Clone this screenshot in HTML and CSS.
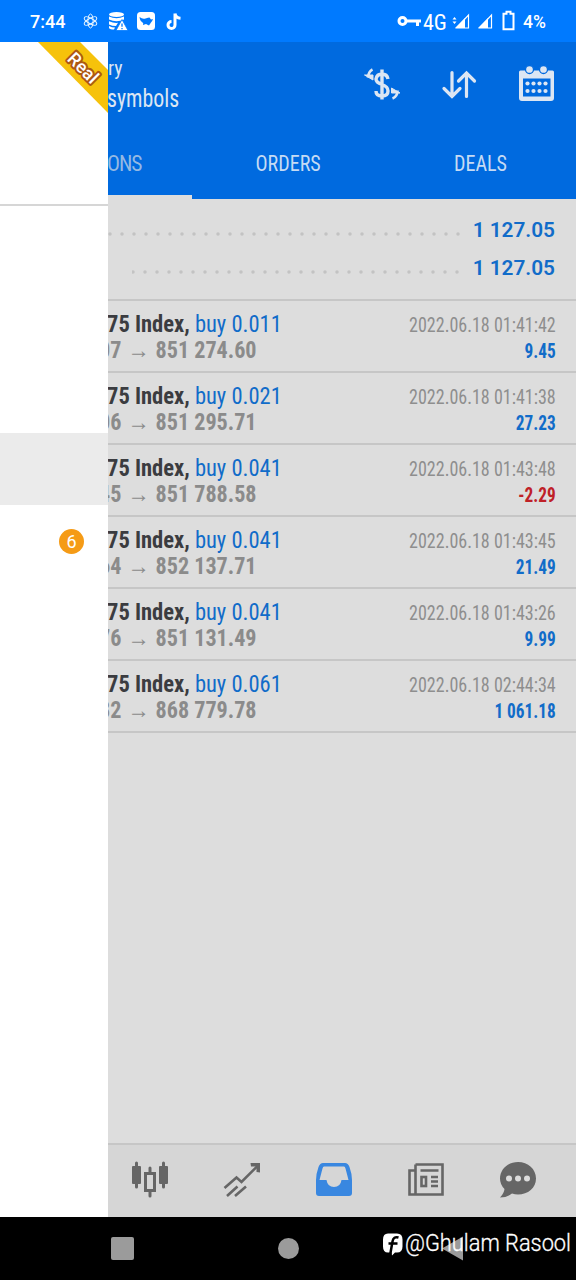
FILE: index.html
```html
<!DOCTYPE html>
<html lang="en">
<head>
<meta charset="utf-8">
<title>History</title>
<link rel="stylesheet" href="styles.css">
</head>
<body>
<div class="phone">
  <header class="status">
    <span class="clock">7:44</span>
    <svg class="s-left" width="102" height="22" viewBox="82 10 102 22">
      <g fill="none" stroke="#e6f4ff" stroke-width="1"><ellipse cx="90.500" cy="21" rx="2.600" ry="7"/><ellipse cx="90.500" cy="21" rx="2.600" ry="7" transform="rotate(60 90.500 21)"/><ellipse cx="90.500" cy="21" rx="2.600" ry="7" transform="rotate(120 90.500 21)"/></g>
      <g fill="#fff"><ellipse cx="116.500" cy="14.500" rx="7.500" ry="2.500"/><path d="M109 16.500q7.500 3.500 15 0v3q-7.500 3.500-15 0zM109 21.300q5 2 9 1.500l-2 3.200q-4 0-7-1.500zM109 26q3 1.500 6 1.500l-1 2q-4 0-5-1.500z"/><path d="M122 19.500l6 11h-12z" stroke="#007aff" stroke-width=".8"/></g><path d="M122 23.500v3.200M122 28v1.200" stroke="#007aff" stroke-width="1.300"/>
      <rect x="137" y="12" width="18" height="18" rx="3.500" fill="#fff"/><path d="M139.500 17q3 2.500 6 1.500t4-1l1.500 2 2-.5q-1 3-2 3.500l-2 3-3-1.500-3 1q1-2-1-3t-2.500-5z" fill="#007aff"/>
      <path d="M175 13.500v11.500a3.500 3.500 0 1 1-3.500-3.500M175 13.500q.7 4.500 5.500 4.800" fill="none" stroke="#fff" stroke-width="3"/>
    </svg>
    <svg class="s-key" width="25" height="14" viewBox="0 0 25 14"><circle cx="5.500" cy="7" r="3.500" fill="none" stroke="#fff" stroke-width="3"/><path d="M9 7h15M20.500 7v5" stroke="#fff" stroke-width="3"/></svg>
    <span class="net">4G</span>
    <svg class="s-sig" width="64" height="22" viewBox="450 10 64 22"><path d="M451.500 19.500l2-2.500 2 2.500zM451.500 21.500l2 2.500 2-2.500z" fill="#fff"/><path d="M467.500 15v13h-12zM490.500 15v13h-12z" fill="none" stroke="#fff" stroke-width="1.200"/><path d="M464 18v10h-10zM487 18v10h-10z" fill="#fff"/><path d="M502.500 13.700h3v-2h4v2h3v15.600h-10z" fill="none" stroke="#fff" stroke-width="2"/></svg>
    <span class="pct">4%</span>
  </header>
  <div class="body">
    <aside class="drawer">
      <div class="account">
        <svg width="108" height="74" viewBox="0 42 108 74"><path d="M38 42h42l28 28v43z" fill="#f6c20b"/><text class="ribbon" x="83" y="74" transform="rotate(45 83 68)" text-anchor="middle">Real</text></svg>
      </div>
      <div class="item gap"></div>
      <div class="item selected"></div>
      <div class="item mail"><span class="badge">6</span></div>
    </aside>
    <main class="content">
      <div class="appbar">
        <div class="titles"><div class="t1">ry</div><div class="t2">symbols</div></div>
        <div class="actions">
          <svg width="38" height="38" viewBox="363 65 38 38" fill="none" stroke="#dce6f3"><path d="M388 79q-1-5-6-5t-6 5q0 3.500 6 5.500t6 6.500q0 5-6 5t-6-5M382 69.500v30" stroke-width="3.400"/><path d="M372.500 69.500q-4 2-4.500 8M392.500 98.500q5-2 5-8" stroke-width="2.600"/><path d="M364.500 75l8.500 5v-5zM400 93l-8.500-5v5z" fill="#dce6f3" stroke-width="1"/></svg>
          <svg width="38" height="38" viewBox="440.500 65 38 38" fill="none" stroke="#dce6f3" stroke-width="3.200" stroke-linecap="round"><path d="M452.500 72.500v23M444.500 88.500l8 8 8-8M467 96.500V74M459 81l8-8 8 8"/></svg>
          <svg width="38" height="38" viewBox="517 65 38 38"><path d="M519 72q0-1.500 1.500-1.500h32q1.500 0 1.500 1.500v26q0 3-3 3h-29q-3 0-3-3zM523 78.500v18h27.500v-18z" fill="#dce6f3" fill-rule="evenodd"/><g fill="#dce6f3" stroke="#006adf" stroke-width="1.300"><circle cx="529.500" cy="69.500" r="4"/><circle cx="543.500" cy="69.500" r="4"/></g><g fill="#dce6f3"><circle cx="527.500" cy="83.500" r="2.100"/><circle cx="533.500" cy="83.500" r="2.100"/><circle cx="539.500" cy="83.500" r="2.100"/><circle cx="545.500" cy="83.500" r="2.100"/><circle cx="527.500" cy="91" r="2.100"/><circle cx="533.500" cy="91" r="2.100"/><circle cx="539.500" cy="91" r="2.100"/><circle cx="545.500" cy="91" r="2.100"/></g></svg>
        </div>
      </div>
      <nav class="tabs"><div class="tab active">ONS</div><div class="tab"><span>ORDERS</span></div><div class="tab"><span>DEALS</span></div></nav>
      <section class="summary">
        <div class="sum"><svg width="354" height="4"><path d="M2 2h352" class="dots"/></svg><b>1 127.05</b></div>
        <div class="sum"><svg width="330" height="4"><path d="M1 2h328" class="dots"/></svg><b>1 127.05</b></div>
      </section>
      <section class="deals">
        <div class="row"><div class="l"><div class="sym"><b>75 Index,</b> buy 0.011</div><div class="price">07 <i>→</i> 851 274.60</div></div><div class="r"><div class="date">2022.06.18 01:41:42</div><div class="profit">9.45</div></div></div>
        <div class="row"><div class="l"><div class="sym"><b>75 Index,</b> buy 0.021</div><div class="price">06 <i>→</i> 851 295.71</div></div><div class="r"><div class="date">2022.06.18 01:41:38</div><div class="profit">27.23</div></div></div>
        <div class="row"><div class="l"><div class="sym"><b>75 Index,</b> buy 0.041</div><div class="price">45 <i>→</i> 851 788.58</div></div><div class="r"><div class="date">2022.06.18 01:43:48</div><div class="profit loss">-2.29</div></div></div>
        <div class="row"><div class="l"><div class="sym"><b>75 Index,</b> buy 0.041</div><div class="price">64 <i>→</i> 852 137.71</div></div><div class="r"><div class="date">2022.06.18 01:43:45</div><div class="profit">21.49</div></div></div>
        <div class="row"><div class="l"><div class="sym"><b>75 Index,</b> buy 0.041</div><div class="price">76 <i>→</i> 851 131.49</div></div><div class="r"><div class="date">2022.06.18 01:43:26</div><div class="profit">9.99</div></div></div>
        <div class="row"><div class="l"><div class="sym"><b>75 Index,</b> buy 0.061</div><div class="price">82 <i>→</i> 868 779.78</div></div><div class="r"><div class="date">2022.06.18 02:44:34</div><div class="profit">1 061.18</div></div></div>
      </section>
      <nav class="bottom">
        <svg width="40" height="40" viewBox="130 1160 40 40" fill="#666"><rect x="132" y="1166" width="9" height="18" rx="1"/><rect x="159" y="1166" width="9" height="18" rx="1"/><path d="M136.500 1163v24M163.500 1163v24M150 1168v5M150 1191v5" stroke="#666" stroke-width="3" stroke-linecap="round"/><rect x="145.500" y="1173.500" width="9" height="17" fill="none" stroke="#666" stroke-width="3"/></svg>
        <svg width="40" height="40" viewBox="222 1160 40 40" fill="none" stroke="#666" stroke-width="2.600"><path d="M224.500 1188l12-10.500 5 4.500 17-17M227 1196l10.500-9.500M235 1196l11-9.500" /><path d="M250.500 1163h9.500v9.500l-3.500-.5v-5.500h-5.500z" fill="#666" stroke="none"/></svg>
        <svg width="40" height="40" viewBox="314 1160 40 40"><path d="M323 1163h22q3 0 4.500 4 2.500 7 2.500 13v13q0 3-3 3h-30q-3 0-3-3v-13q0-6 2.500-13 1.500-4 4.500-4zM324 1166.500q-1 0-1.500 2l-3 11.500h7q1 7 7.500 7t7.500-7h7l-3-11.500q-.5-2-1.500-2z" fill="#3987e0" fill-rule="evenodd"/></svg>
        <svg width="40" height="40" viewBox="406 1160 40 40" fill="none" stroke="#666" stroke-width="2.600"><path d="M415.500 1164.500h27v30h-33v-24h6M415.500 1164.500v30M420.500 1170.500h18M431 1177h7M431 1181.500h7M431 1186h7" /><rect x="421.500" y="1177" width="4.500" height="9"/></svg>
        <svg width="40" height="40" viewBox="498 1160 40 40"><path d="M518 1162c10 0 18 7 18 16.500s-8 16-18 16q-3 0-6-1-5 4-12 4 4-4 4.500-8.500-4.500-4.500-4.500-10.500c0-9.500 8-16.500 18-16.500z" fill="#666"/><g fill="#dcdcdc"><circle cx="509" cy="1178.500" r="3"/><circle cx="518" cy="1178.500" r="3"/><circle cx="527" cy="1178.500" r="3"/></g></svg>
      </nav>
    </main>
  </div>
  <footer class="sys">
    <svg width="576" height="63" viewBox="0 1217 576 63"><g fill="#9b9b9b"><rect x="111" y="1237" width="23" height="23" rx="2"/><circle cx="288.500" cy="1248.500" r="10.500"/><path d="M442 1248.500l21-12v24z"/></g><path d="M388 1233.500h9q5.500 0 5.500 6v7q0 6-5.500 6h-2l-3 3-.5-3h-3.500q-5 0-5-6v-7q0-6 5-6z" fill="#fff"/><path d="M398.500 1237.500q-5-1.500-6 4l-2.300 13M388.500 1243.500h9" stroke="#000" stroke-width="2.500" fill="none"/><text class="mark" x="405" y="1250.500" textLength="166" lengthAdjust="spacingAndGlyphs">@Ghulam Rasool</text></svg>
  </footer>
</div>
</body>
</html>
```
FILE: styles.css
```css
* { box-sizing: border-box; }
body { margin: 0; background: #000; font-family: "Roboto Condensed", Roboto, "Liberation Sans", sans-serif; }
svg { display: block; flex: none; }
.phone { width: 576px; height: 1280px; display: flex; flex-direction: column; overflow: hidden; }
.status { height: 42px; background: #007aff; color: #fff; display: flex; align-items: center; font-family: Roboto, sans-serif; font-weight: 500; white-space: nowrap; }
.clock { font-size: 18px; width: 52px; margin-left: 30px; }
.s-key { margin-left: 213px; }
.net { font: 22px "Roboto Condensed", Roboto, sans-serif; width: 25px; margin: 2px 3px 0 1px; }
.pct { font-size: 17.5px; margin: 2px 0 0 8px; }
.body { height: 1175px; display: flex; }
.drawer { width: 108px; flex: none; background: #fff; }
.account { height: 164px; border-bottom: 2px solid #d6d6d6; }
.ribbon { font: 500 18px Roboto, sans-serif; fill: #fff; stroke: #ad5812; stroke-width: 4px; paint-order: stroke; stroke-linejoin: round; }
.item { height: 72px; }
.gap { height: 227px; }
.selected { background: #ebebeb; }
.mail { display: flex; align-items: center; padding-left: 59px; }
.badge { width: 25px; height: 25px; border-radius: 50%; background: #f59b16; color: #fff; text-align: center; font: 18px/26px Roboto, sans-serif; }
.content { width: 468px; display: flex; flex-direction: column; overflow: hidden; background: #ddd; }
.appbar { height: 84px; background: #006adf; color: #dce6f3; display: flex; justify-content: space-between; }
.titles { padding-top: 14px; white-space: nowrap; }
.t1 { font-size: 20px; line-height: 25px; }
.t2 { font-size: 26px; line-height: 34px; margin-left: -1px; transform: scaleX(.84); transform-origin: left; }
.actions { display: flex; gap: 39px; padding: 23px 21px 0 0; }
.tabs { height: 73px; background: #006adf; display: flex; justify-content: flex-end; color: #c5dbf4; font-size: 21.6px; line-height: 75px; }
.tab { width: 192px; flex: none; text-align: center; }
.tab span { display: inline-block; transform: scaleX(.93); }
.tab.active { width: 84px; border-bottom: 4px solid #ddd; text-align: left; color: #94b9e3; text-indent: -1px; letter-spacing: -1px; }
.summary { height: 100px; padding: 12px 21px 0 0; }
.sum { height: 38px; display: flex; align-items: center; justify-content: flex-end; gap: 10px; color: #116cc9; font-family: Roboto, sans-serif; font-size: 20.8px; }
.sum svg { margin-top: 8px; }
.sum b { width: 83px; text-align: right; white-space: nowrap; font-weight: 600; }
.dots { stroke: #c3c3c3; stroke-width: 3.500px; stroke-linecap: round; stroke-dasharray: 0 12; }
.deals { flex: 1; }
.row { height: 72px; border-top: 2px solid #c6c6c6; display: flex; justify-content: space-between; white-space: nowrap; padding-right: 20px; }
.row:last-child { height: 74px; border-bottom: 2px solid #c6c6c6; }
.l { padding-top: 10px; font-size: 24px; line-height: 26px; }
.sym { color: #116cc9; margin-left: -1px; transform: scaleX(.938); transform-origin: left; }
.sym b { color: #3b3c40; }
.price { color: #8b8b8b; font-weight: 700; margin-left: -9px; transform: scaleX(.922); transform-origin: left; }
.price i { font-style: normal; font-weight: 400; margin: 0 1px; }
.r { text-align: right; font-size: 19.4px; line-height: 26px; padding-top: 12px; color: #8e8e8e; }
.date { transform: scaleX(.93); transform-origin: right; }
.profit { color: #116cc9; font-weight: 700; transform: scaleX(.89); transform-origin: right; }
.loss { color: #bf2027; }
.bottom { height: 74px; border-top: 2px solid #c6c6c6; background: #d6d6d6; display: flex; gap: 52px; padding: 15px 0 0 22px; }
.sys { height: 63px; background: #000; }
.mark { font: 300 23px Roboto, sans-serif; fill: #fff; stroke: #fff; stroke-width: .3px; }
```
